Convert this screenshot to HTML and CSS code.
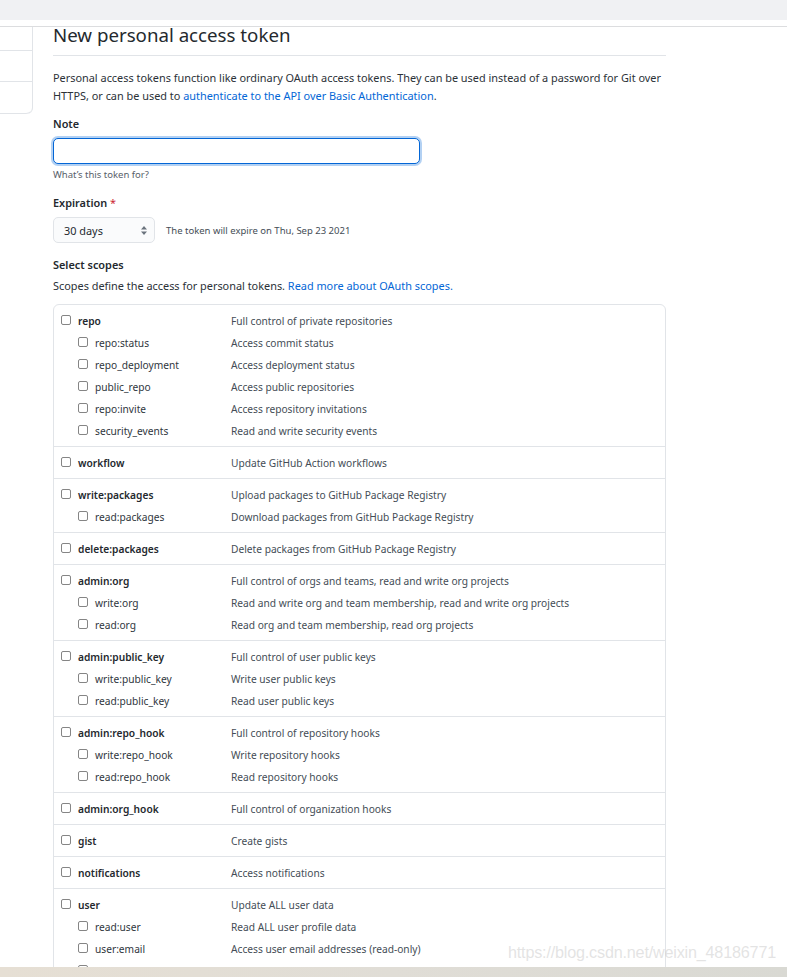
FILE: index.html
```html
<!DOCTYPE html>
<html lang="en">
<head>
<meta charset="utf-8">
<title>New personal access token</title>
<link rel="stylesheet" href="styles.css">
</head>
<body>
<div class="topbar"></div>
<div class="header-line"></div>
<div class="layout">
  <nav class="sidebar">
    <div class="side-item side-item-1"></div>
    <div class="side-item side-item-2"></div>
    <div class="side-item side-item-3"></div>
  </nav>
  <main class="main">
    <h1 class="title">New personal access token</h1>
    <p class="intro">Personal access tokens function like ordinary OAuth access tokens. They can be used instead of a password for Git over HTTPS, or can be used to <a href="#" class="link">authenticate to the API over Basic Authentication</a>.</p>

    <label class="field-label">Note</label>
    <input class="note-input" type="text">
    <p class="hint">What’s this token for?</p>

    <label class="field-label field-label-exp">Expiration <span class="required">*</span></label>
    <div class="expiry-row">
      <div class="select">
        <span>30 days</span>
        <svg class="select-arrows" width="6" height="9" viewBox="0 0 6 9"><path d="M3 0L6 3.5H0Z M3 9L0 5.5H6Z" fill="#6a737d"/></svg>
      </div>
      <span class="expiry-note">The token will expire on Thu, Sep 23 2021</span>
    </div>

    <h3 class="field-label field-label-scopes">Select scopes</h3>
    <p class="scopes-desc">Scopes define the access for personal tokens. <a href="#" class="link">Read more about OAuth scopes.</a></p>

    <div class="scopes">
      <div class="group">
        <div class="row parent"><span class="name"><input type="checkbox" class="cb">repo</span><span class="desc">Full control of private repositories</span></div>
        <div class="row child"><span class="name"><input type="checkbox" class="cb">repo:status</span><span class="desc">Access commit status</span></div>
        <div class="row child"><span class="name"><input type="checkbox" class="cb">repo_deployment</span><span class="desc">Access deployment status</span></div>
        <div class="row child"><span class="name"><input type="checkbox" class="cb">public_repo</span><span class="desc">Access public repositories</span></div>
        <div class="row child"><span class="name"><input type="checkbox" class="cb">repo:invite</span><span class="desc">Access repository invitations</span></div>
        <div class="row child"><span class="name"><input type="checkbox" class="cb">security_events</span><span class="desc">Read and write security events</span></div>
      </div>
      <div class="group">
        <div class="row parent"><span class="name"><input type="checkbox" class="cb">workflow</span><span class="desc">Update GitHub Action workflows</span></div>
      </div>
      <div class="group">
        <div class="row parent"><span class="name"><input type="checkbox" class="cb">write:packages</span><span class="desc">Upload packages to GitHub Package Registry</span></div>
        <div class="row child"><span class="name"><input type="checkbox" class="cb">read:packages</span><span class="desc">Download packages from GitHub Package Registry</span></div>
      </div>
      <div class="group">
        <div class="row parent"><span class="name"><input type="checkbox" class="cb">delete:packages</span><span class="desc">Delete packages from GitHub Package Registry</span></div>
      </div>
      <div class="group">
        <div class="row parent"><span class="name"><input type="checkbox" class="cb">admin:org</span><span class="desc">Full control of orgs and teams, read and write org projects</span></div>
        <div class="row child"><span class="name"><input type="checkbox" class="cb">write:org</span><span class="desc">Read and write org and team membership, read and write org projects</span></div>
        <div class="row child"><span class="name"><input type="checkbox" class="cb">read:org</span><span class="desc">Read org and team membership, read org projects</span></div>
      </div>
      <div class="group">
        <div class="row parent"><span class="name"><input type="checkbox" class="cb">admin:public_key</span><span class="desc">Full control of user public keys</span></div>
        <div class="row child"><span class="name"><input type="checkbox" class="cb">write:public_key</span><span class="desc">Write user public keys</span></div>
        <div class="row child"><span class="name"><input type="checkbox" class="cb">read:public_key</span><span class="desc">Read user public keys</span></div>
      </div>
      <div class="group">
        <div class="row parent"><span class="name"><input type="checkbox" class="cb">admin:repo_hook</span><span class="desc">Full control of repository hooks</span></div>
        <div class="row child"><span class="name"><input type="checkbox" class="cb">write:repo_hook</span><span class="desc">Write repository hooks</span></div>
        <div class="row child"><span class="name"><input type="checkbox" class="cb">read:repo_hook</span><span class="desc">Read repository hooks</span></div>
      </div>
      <div class="group">
        <div class="row parent"><span class="name"><input type="checkbox" class="cb">admin:org_hook</span><span class="desc">Full control of organization hooks</span></div>
      </div>
      <div class="group">
        <div class="row parent"><span class="name"><input type="checkbox" class="cb">gist</span><span class="desc">Create gists</span></div>
      </div>
      <div class="group">
        <div class="row parent"><span class="name"><input type="checkbox" class="cb">notifications</span><span class="desc">Access notifications</span></div>
      </div>
      <div class="group">
        <div class="row parent"><span class="name"><input type="checkbox" class="cb">user</span><span class="desc">Update ALL user data</span></div>
        <div class="row child"><span class="name"><input type="checkbox" class="cb">read:user</span><span class="desc">Read ALL user profile data</span></div>
        <div class="row child"><span class="name"><input type="checkbox" class="cb">user:email</span><span class="desc">Access user email addresses (read-only)</span></div>
        <div class="row child"><span class="name"><input type="checkbox" class="cb">user:follow</span><span class="desc">Follow and unfollow users</span></div>
      </div>
    </div>
  </main>
</div>
<div class="watermark">https://blog.csdn.net/weixin_48186771</div>
<div class="bottom-band"></div>
</body>
</html>
```
FILE: styles.css
```css
html, body {
  margin: 0;
  padding: 0;
  overflow: hidden;
  background: #ffffff;
}
body {
  position: relative;
  height: 977px;
  font-family: "Noto Sans", "Open Sans", sans-serif;
  font-size: 10.9px;
  color: #24292e;
}
.topbar {
  height: 20px;
  background: #f0f1f3;
  margin-bottom: 6px;
}
.header-line {
  border-top: 1px solid #dcdddf;
}
.layout {
  display: flex;
  align-items: flex-start;
}
.sidebar {
  width: 32px;
  border-right: 1px solid #e1e4e8;
  border-bottom-right-radius: 6px;
  flex: none;
}
.side-item {
  border-bottom: 1px solid #e1e4e8;
}
.side-item-1 { height: 23px; }
.side-item-2 { height: 30px; }
.side-item-3 { height: 31px; border-bottom-right-radius: 6px; }
.main {
  margin-left: 20px;
  width: 613px;
  display: flex;
  flex-direction: column;
  align-items: flex-start;
}
.title {
  align-self: stretch;
  margin: 0;
  font-size: 18.7px;
  font-weight: 400;
  line-height: 16px;
  padding-bottom: 12px;
  border-bottom: 1px solid #e1e4e8;
  color: #24292e;
}
.intro {
  margin: 13px 0 0;
  line-height: 18px;
  color: #2b3137;
}
.link {
  color: #0366d6;
  text-decoration: none;
}
.field-label {
  display: block;
  margin: 10px 0 0;
  font-size: 10.9px;
  font-weight: 600;
  line-height: 18px;
}
.field-label-exp { margin-top: 12px; }
.field-label-scopes { margin-top: 13px; }
.required { color: #cb2431; font-weight: 400; }
.note-input {
  box-sizing: border-box;
  margin: 5px 0 0;
  width: 367px;
  height: 26px;
  border: 1px solid #0366d6;
  border-radius: 5px;
  box-shadow: 0 0 0 2px rgba(3, 102, 214, 0.3);
  outline: none;
  padding: 0 7px;
  font: inherit;
}
.hint {
  margin: 4px 0 0;
  font-size: 9.5px;
  line-height: 14px;
  color: #586069;
}
.expiry-row {
  margin-top: 5px;
  display: flex;
  align-items: center;
  gap: 11px;
}
.select {
  box-sizing: border-box;
  width: 102px;
  height: 26px;
  border: 1px solid #e1e4e8;
  border-radius: 5px;
  background: #fafbfc;
  display: flex;
  align-items: center;
  justify-content: space-between;
  padding: 0 7px 0 10px;
  font-size: 10.9px;
}
.select-arrows { display: block; }
.expiry-note {
  font-size: 9.5px;
  color: #444d56;
}
.scopes-desc {
  margin: 3px 0 0;
  line-height: 18px;
  color: #2b3137;
}
.scopes {
  align-self: stretch;
  margin-top: 9px;
  border: 1px solid #e1e4e8;
  border-radius: 6px;
  font-size: 10.2px;
}
.group {
  padding: 5px 0 4px 7px;
}
.group + .group {
  border-top: 1px solid #e1e4e8;
}
.row {
  height: 22px;
  display: grid;
  grid-template-columns: 170px 1fr;
  align-items: center;
}
.name {
  display: flex;
  align-items: center;
  gap: 7px;
  color: #24292e;
}
.parent .name { font-weight: 600; }
.child .name { padding-left: 17px; color: #2f363d; }
.desc { color: #444d56; }
.cb {
  -webkit-appearance: none;
  appearance: none;
  box-sizing: border-box;
  width: 10px;
  height: 10px;
  margin: 0 0 2px;
  border: 1px solid #858585;
  border-radius: 2px;
  background: #fff;
  flex: none;
}
.watermark {
  position: absolute;
  left: 508px;
  top: 943px;
  font-family: "Liberation Sans", Arial, sans-serif;
  font-size: 16.2px;
  line-height: 18px;
  color: rgba(200, 200, 200, 0.5);
  letter-spacing: -0.2px;
  white-space: nowrap;
}
.bottom-band {
  position: absolute;
  left: 0;
  right: 0;
  top: 967px;
  height: 10px;
  background: linear-gradient(90deg, #e6dfd4 0%, #e0ddd6 50%, #d9d9d3 100%);
}
```
